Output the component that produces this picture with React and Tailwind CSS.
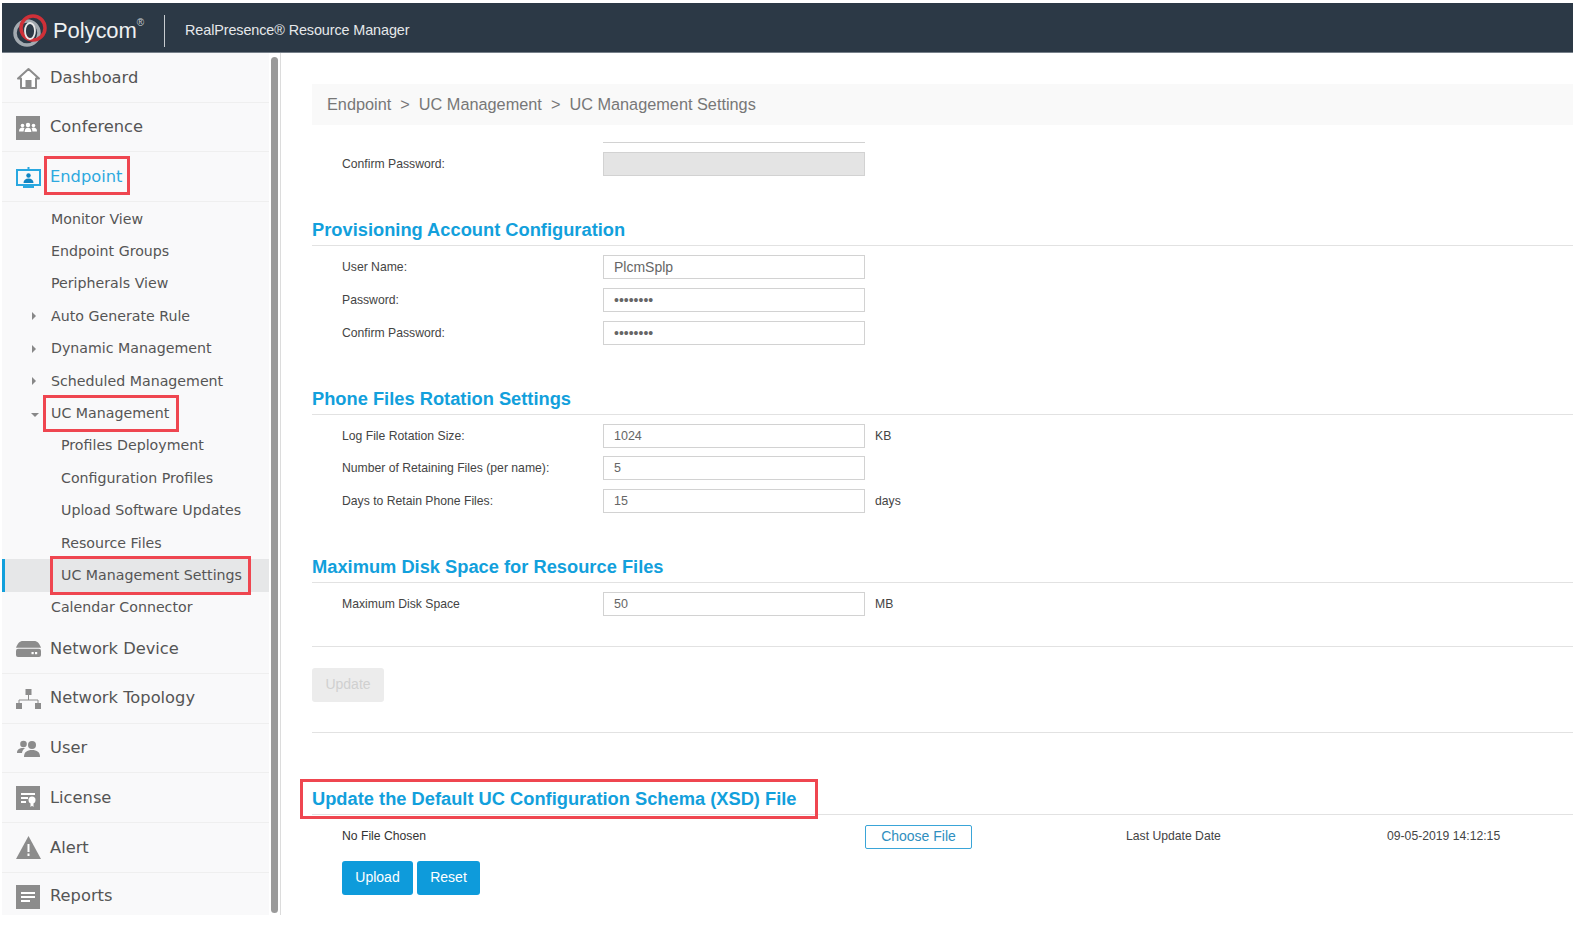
const sans = "font-['Liberation_Sans',Arial,sans-serif]";

function HouseIcon() {
  return (
    <svg width="25" height="22" viewBox="0 0 25 22">
      <path d="M12.500 2 2 11.500h3V21h15v-9.500h3z" fill="#fff" stroke="#8c8c8c" strokeWidth="2" strokeLinejoin="round" />
      <rect x="9.500" y="13" width="6" height="8" fill="#8c8c8c" />
    </svg>
  );
}

function ConferenceIcon() {
  return (
    <svg width="24" height="24" viewBox="0 0 24 24">
      <rect width="24" height="24" fill="#8c8c8c" />
      <g fill="#fff">
        <circle cx="6.500" cy="9.500" r="1.800" />
        <circle cx="17.500" cy="9.500" r="1.800" />
        <circle cx="12" cy="9" r="2.200" />
        <path d="M3 15.500c0-2.800 1.500-3.900 3.500-3.900 1 0 1.600.3 2 .6-.6.8-.9 1.900-.9 3.300zM21 15.500c0-2.800-1.500-3.900-3.500-3.900-1 0-1.600.3-2 .6.600.8.900 1.900.900 3.300zM8.600 16c0-2.800 1.400-4.300 3.400-4.300s3.400 1.500 3.400 4.300z" />
      </g>
    </svg>
  );
}

function EndpointIcon() {
  return (
    <svg width="25" height="21" viewBox="0 0 25 21">
      <rect x="1" y="3" width="23" height="15" fill="none" stroke="#2aa8e0" strokeWidth="2" />
      <rect x="7" y="19" width="11" height="2" fill="#2aa8e0" />
      <rect x="11.500" y="0" width="2" height="3" fill="#2aa8e0" />
      <circle cx="12.500" cy="8.500" r="2.200" fill="#1185c2" />
      <path d="M7.500 16c0-3 2-4.500 5-4.500s5 1.500 5 4.500z" fill="#1185c2" />
    </svg>
  );
}

function DeviceIcon() {
  return (
    <svg width="25" height="16" viewBox="0 0 25 16">
      <path d="M0 6.800C1.500 2.500 3.500 0 7 0h11c3.500 0 5.500 2.500 7 6.800z" fill="#8c8c8c" />
      <rect y="7.800" width="25" height="8.200" rx="2" fill="#8c8c8c" />
      <rect x="15.500" y="11" width="2.200" height="2.200" fill="#fff" />
      <rect x="19" y="11" width="2.200" height="2.200" fill="#fff" />
    </svg>
  );
}

function TopologyIcon() {
  return (
    <svg width="25" height="20" viewBox="0 0 25 20">
      <g fill="#8c8c8c">
        <rect x="9.500" y="0" width="6" height="6" />
        <rect x="0" y="14" width="6" height="6" />
        <rect x="19" y="14" width="6" height="6" />
      </g>
      <path d="M12.500 6v5M3 14v-3h19v3" fill="none" stroke="#8c8c8c" />
    </svg>
  );
}

function UserIcon() {
  return (
    <svg width="24" height="17" viewBox="0 0 24 17">
      <g fill="#8c8c8c">
        <circle cx="7.500" cy="4" r="3.300" />
        <path d="M1 13c0-3.500 2-5 6.500-5 .7 0 1.300 0 1.800.1-1.700 1-3 2.600-3.300 4.900z" />
        <circle cx="16" cy="5" r="4" />
        <path d="M8 17c0-5 3-7 8-7s8 2 8 7z" />
      </g>
    </svg>
  );
}

function LicenseIcon() {
  return (
    <svg width="24" height="24" viewBox="0 0 24 24">
      <rect width="24" height="24" fill="#8c8c8c" />
      <path d="M5 7h14v2H5zM5 11h7v2H5zM5 15h5v2H5z" fill="#fff" />
      <circle cx="16" cy="14" r="3.500" fill="#fff" />
      <path d="M14.500 16.500h3V21l-1.500-1.200-1.500 1.200z" fill="#fff" />
    </svg>
  );
}

function AlertIcon() {
  return (
    <svg width="25" height="23" viewBox="0 0 25 23">
      <path d="M12.500 0 25 23H0z" fill="#8c8c8c" />
      <rect x="11.500" y="8" width="2" height="8" fill="#fff" />
      <rect x="11.500" y="17.500" width="2" height="2.500" fill="#fff" />
    </svg>
  );
}

function ReportsIcon() {
  return (
    <svg width="24" height="24" viewBox="0 0 24 24">
      <rect width="24" height="24" fill="#8c8c8c" />
      <path d="M5 7h14v2H5zM5 11h14v2H5zM5 15h9v2H5z" fill="#fff" />
    </svg>
  );
}

function RedBox({ className }) {
  return <span className={`absolute border-[3px] border-[#ef4650] pointer-events-none ${className}`} />;
}

function MainItem({ icon, children, active, last }) {
  return (
    <div className={`flex items-center pl-[14px] ${last ? "h-[43px] pt-[5px]" : "h-[49.7px] pt-[1px] border-b border-[#efefef]"}`}>
      <span className="w-[34px] flex items-center shrink-0">{icon}</span>
      <span className={`text-[16.3px] ${active ? "text-[#2ea9df]" : "text-[#555]"}`}>{children}</span>
    </div>
  );
}

function SubItem({ children, caret, indent, selected }) {
  return (
    <div className={`relative flex items-center h-[32.4px] text-[14.2px] text-[#555] ${indent ? "pl-[59px]" : "pl-[49px]"} ${selected ? "bg-[#e6e7e8] border-l-[3px] border-[#12a0dc] !pl-[56px]" : ""}`}>
      {caret === "right" && <span className="absolute left-[30px] top-[12px] border-y-[4px] border-l-[4px] border-y-transparent border-l-[#888]" />}
      {caret === "down" && <span className="absolute left-[29px] top-[16px] border-x-[4px] border-t-[4px] border-x-transparent border-t-[#888]" />}
      {children}
    </div>
  );
}

function Field({ label, value, type = "text", unit, disabled, big }) {
  return (
    <div className={`flex items-center h-[24px] pl-[30px] text-[12.2px] text-[#444] ${sans}`}>
      <label className="w-[261px] shrink-0">{label}</label>
      <input
        readOnly
        type={type}
        value={value}
        disabled={disabled}
        className={`w-[262px] h-[24px] px-[10px] border border-[#d2d2d2] text-[#666] outline-none ${big ? "text-[14px]" : "text-[12.5px]"} ${disabled ? "bg-[#e4e4e4]" : "bg-white"}`}
      />
      {unit && <span className="ml-[10px]">{unit}</span>}
    </div>
  );
}

function SectionHead({ children, className = "" }) {
  return (
    <div className={`h-[31px] border-b border-[#e2e2e2] text-[18.3px] font-bold text-[#12a0dc] leading-[30px] ${className}`}>
      {children}
    </div>
  );
}

export default function App() {
  return (
    <div className="w-[1588px] h-[932px] overflow-hidden bg-white pt-[3px] pl-[2px] pr-[15px] font-['DejaVu_Sans',sans-serif]">
      <header className={`flex items-center h-[50px] pt-[6px] bg-[#2c3946] border-b border-[#77808a] ${sans}`}>
        <svg className="ml-[10px]" width="36" height="36" viewBox="0 0 36 36">
          <circle cx="15" cy="20" r="12" fill="none" stroke="#a3aab0" strokeWidth="3.500" />
          <circle cx="21" cy="15" r="12" fill="none" stroke="#cf3038" strokeWidth="3.500" />
          <ellipse cx="18" cy="18" rx="5" ry="8" fill="none" stroke="#e8e8e8" strokeWidth="1.800" />
        </svg>
        <span className="ml-[5px] text-[22px] tracking-[-0.1px] text-[#eef0f1]">Polycom</span>
        <sup className="text-[10px] text-[#c8ccd0] -mt-[6px]">®</sup>
        <span className="ml-[20px] w-px h-[32px] bg-[#c8ccd0]" />
        <span className="ml-[20px] text-[14.4px] tracking-[-0.1px] text-[#e6e8ea]">RealPresence® Resource Manager</span>
      </header>

      <div className="flex h-[862px]">
        <aside className="flex shrink-0 w-[279px] border-r border-[#dcdcdc]">
          <nav className="w-[267px] shrink-0 bg-[#f9f9fa]">
            <MainItem icon={<HouseIcon />}>Dashboard</MainItem>
            <MainItem icon={<ConferenceIcon />}>Conference</MainItem>
            <MainItem icon={<EndpointIcon />} active>
              <span className="relative">
                Endpoint
                <RedBox className="-left-[6px] -right-[8px] -top-[11px] -bottom-[9px]" />
              </span>
            </MainItem>
            <div className="pt-[1px]">
              <SubItem>Monitor View</SubItem>
              <SubItem>Endpoint Groups</SubItem>
              <SubItem>Peripherals View</SubItem>
              <SubItem caret="right">Auto Generate Rule</SubItem>
              <SubItem caret="right">Dynamic Management</SubItem>
              <SubItem caret="right">Scheduled Management</SubItem>
              <SubItem caret="down">
                <span className="relative">
                  UC Management
                  <RedBox className="-left-[8px] -right-[10px] -top-[8px] -bottom-[8px]" />
                </span>
              </SubItem>
              <SubItem indent>Profiles Deployment</SubItem>
              <SubItem indent>Configuration Profiles</SubItem>
              <SubItem indent>Upload Software Updates</SubItem>
              <SubItem indent>Resource Files</SubItem>
              <SubItem indent selected>
                <span className="relative">
                  UC Management Settings
                  <RedBox className="-left-[11px] -right-[9px] -top-[9px] -bottom-[9px]" />
                </span>
              </SubItem>
              <SubItem>Calendar Connector</SubItem>
            </div>
            <MainItem icon={<DeviceIcon />}>Network Device</MainItem>
            <MainItem icon={<TopologyIcon />}>Network Topology</MainItem>
            <MainItem icon={<UserIcon />}>User</MainItem>
            <MainItem icon={<LicenseIcon />}>License</MainItem>
            <MainItem icon={<AlertIcon />}>Alert</MainItem>
            <MainItem icon={<ReportsIcon />} last>Reports</MainItem>
          </nav>
          <div className="ml-[2px] mt-[4px] mb-[2px] w-[7px] rounded-full bg-[#9a9a9a]" />
        </aside>

        <main className={`flex-1 min-w-0 pl-[31px] pt-[31px] ${sans}`}>
          <div className="flex items-center h-[41px] pl-[15px] bg-[#f9f9f9] text-[16.3px] text-[#777]">
            <span>Endpoint</span>
            <span className="mx-[9px]">&gt;</span>
            <span>UC Management</span>
            <span className="mx-[9px]">&gt;</span>
            <span>UC Management Settings</span>
          </div>

          <div className="ml-[291px] mt-[17px] w-[262px] h-px bg-[#d2d2d2]" />
          <div className="mt-[9px]">
            <Field label="Confirm Password:" value="" disabled />
          </div>

          <SectionHead className="mt-[39px]">Provisioning Account Configuration</SectionHead>
          <div className="mt-[9px] flex flex-col gap-[9px]">
            <Field label="User Name:" value="PlcmSplp" big />
            <Field label="Password:" value="password" type="password" big />
            <Field label="Confirm Password:" value="password" type="password" big />
          </div>

          <SectionHead className="mt-[39px]">Phone Files Rotation Settings</SectionHead>
          <div className="mt-[9px] flex flex-col gap-[8.4px]">
            <Field label="Log File Rotation Size:" value="1024" unit="KB" />
            <Field label="Number of Retaining Files (per name):" value="5" />
            <Field label="Days to Retain Phone Files:" value="15" unit="days" />
          </div>

          <SectionHead className="mt-[39px]">Maximum Disk Space for Resource Files</SectionHead>
          <div className="mt-[9px]">
            <Field label="Maximum Disk Space" value="50" unit="MB" />
          </div>

          <div className="mt-[30px] h-px bg-[#e2e2e2]" />
          <button className="mt-[21px] block w-[72px] h-[34px] rounded-[3px] bg-[#ececec] text-[14px] text-[#d0d0d0]">Update</button>
          <div className="mt-[30px] h-px bg-[#e2e2e2]" />

          <SectionHead className="mt-[51px]">
            <span className="relative">
              Update the Default UC Configuration Schema (XSD) File
              <RedBox className="-left-[12px] -right-[21px] -top-[9px] -bottom-[10px]" />
            </span>
          </SectionHead>

          <div className="mt-[10px] flex items-start pl-[30px] text-[12.2px] text-[#444]">
            <div className="w-[523px] shrink-0">
              <div className="mt-[2px] h-[16px] text-[#333]">No File Chosen</div>
              <div className="mt-[18px] flex gap-[4px]">
                <button className="w-[71px] h-[34px] rounded-[3px] bg-[#0e9bdb] text-[14px] text-white">Upload</button>
                <button className="w-[63px] h-[34px] rounded-[3px] bg-[#0e9bdb] text-[14px] text-white">Reset</button>
              </div>
            </div>
            <button className="w-[107px] h-[24px] rounded-[2px] border border-[#3aa5d8] text-[14px] text-[#2f8fc0] shrink-0">Choose File</button>
            <span className="ml-[154px] mt-[2px] w-[261px] shrink-0">Last Update Date</span>
            <span className="mt-[2px]">09-05-2019 14:12:15</span>
          </div>
        </main>
      </div>
    </div>
  );
}
